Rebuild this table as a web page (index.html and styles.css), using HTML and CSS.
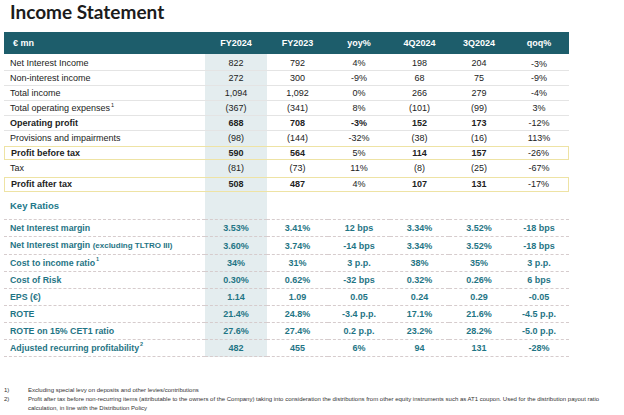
FILE: index.html
```html
<!DOCTYPE html>
<html lang="en">
<head>
<meta charset="utf-8">
<title>Income Statement</title>
<link rel="stylesheet" href="styles.css">
</head>
<body>
<h1 class="title">Income Statement</h1>
<table class="fin">
  <colgroup>
    <col class="c-label"><col class="c-fy24"><col class="c-fy23"><col class="c-yoy"><col class="c-4q"><col class="c-3q"><col class="c-qoq">
  </colgroup>
  <thead>
    <tr><th class="lbl">€ mn</th><th>FY2024</th><th>FY2023</th><th>yoy%</th><th>4Q2024</th><th>3Q2024</th><th>qoq%</th></tr>
  </thead>
  <tbody class="is">
    <tr class="first"><td class="lbl">Net Interest Income</td><td>822</td><td>792</td><td>4%</td><td>198</td><td>204</td><td class="q1">-3%</td></tr>
    <tr><td class="lbl">Non-interest income</td><td>272</td><td>300</td><td>-9%</td><td>68</td><td>75</td><td>-9%</td></tr>
    <tr><td class="lbl">Total income</td><td>1,094</td><td>1,092</td><td>0%</td><td>266</td><td>279</td><td>-4%</td></tr>
    <tr><td class="lbl">Total operating expenses<sup class="fn">1</sup></td><td>(367)</td><td>(341)</td><td>8%</td><td>(101)</td><td>(99)</td><td>3%</td></tr>
    <tr class="b"><td class="lbl">Operating profit</td><td>688</td><td>708</td><td>-3%</td><td>152</td><td>173</td><td class="reg">-12%</td></tr>
    <tr class="nob"><td class="lbl">Provisions and impairments</td><td>(98)</td><td>(144)</td><td>-32%</td><td>(38)</td><td>(16)</td><td>113%</td></tr>
    <tr class="b box pbt"><td class="lbl">Profit before tax</td><td>590</td><td>564</td><td class="reg">5%</td><td>114</td><td>157</td><td class="reg">-26%</td></tr>
    <tr class="nob tall"><td class="lbl">Tax</td><td>(81)</td><td>(73)</td><td>11%</td><td>(8)</td><td>(25)</td><td>-67%</td></tr>
    <tr class="b box"><td class="lbl">Profit after tax</td><td>508</td><td>487</td><td class="reg">4%</td><td>107</td><td>131</td><td class="reg">-17%</td></tr>
  </tbody>
  <tbody class="ratios">
    <tr class="krh"><td class="lbl">Key Ratios</td><td></td><td></td><td></td><td></td><td></td><td></td></tr>
    <tr class="kr"><td class="lbl">Net Interest margin</td><td>3.53%</td><td>3.41%</td><td>12 bps</td><td>3.34%</td><td>3.52%</td><td>-18 bps</td></tr>
    <tr class="kr"><td class="lbl">Net Interest margin <span class="small">(excluding TLTRO III)</span></td><td>3.60%</td><td>3.74%</td><td>-14 bps</td><td>3.34%</td><td>3.52%</td><td>-18 bps</td></tr>
    <tr class="kr"><td class="lbl">Cost to income ratio<sup class="fn">1</sup></td><td>34%</td><td>31%</td><td>3 p.p.</td><td>38%</td><td>35%</td><td>3 p.p.</td></tr>
    <tr class="kr"><td class="lbl">Cost of Risk</td><td>0.30%</td><td>0.62%</td><td>-32 bps</td><td>0.32%</td><td>0.26%</td><td>6 bps</td></tr>
    <tr class="kr"><td class="lbl">EPS (€)</td><td>1.14</td><td>1.09</td><td>0.05</td><td>0.24</td><td>0.29</td><td>-0.05</td></tr>
    <tr class="kr"><td class="lbl">ROTE</td><td>21.4%</td><td>24.8%</td><td>-3.4 p.p.</td><td>17.1%</td><td>21.6%</td><td>-4.5 p.p.</td></tr>
    <tr class="kr"><td class="lbl">ROTE on 15% CET1 ratio</td><td>27.6%</td><td>27.4%</td><td>0.2 p.p.</td><td>23.2%</td><td>28.2%</td><td>-5.0 p.p.</td></tr>
    <tr class="kr last"><td class="lbl">Adjusted recurring profitability<sup class="fn">2</sup></td><td>482</td><td>455</td><td>6%</td><td>94</td><td>131</td><td>-28%</td></tr>
  </tbody>
</table>
<ol class="notes">
  <li><span class="num">1)</span><span>Excluding special levy on deposits and other levies/contributions</span></li>
  <li><span class="num">2)</span><span>Profit after tax before non-recurring items (attributable to the owners of the Company) taking into consideration the distributions from other equity instruments such as AT1 coupon. Used for the distribution payout ratio calculation, in line with the Distribution Policy</span></li>
</ol>
</body>
</html>
```

FILE: styles.css
```css
* { box-sizing: border-box; }

body {
  margin: 0;
  width: 624px;
  background: #ffffff;
  color: #222222;
  font-family: "Liberation Sans", Arial, sans-serif;
}

.title {
  margin: 0;
  height: 32px;
  padding: 1px 0 0 10px;
  font-family: Lato, "Open Sans", sans-serif;
  font-weight: 700;
  font-size: 19px;
  line-height: 22px;
  color: #1c1c1c;
}

.fin {
  margin-left: 4px;
  width: 565px;
  table-layout: fixed;
  border-collapse: separate;
  border-spacing: 0;
  font-size: 9px;
}

.c-label { width: 201px; }
.c-fy24 { width: 62px; background: #e4edef; }
.c-fy23 { width: 61px; }
.c-yoy { width: 62px; }
.c-4q { width: 59px; }
.c-3q { width: 60px; }
.c-qoq { width: 60px; }

.fin th {
  height: 22px;
  padding: 0;
  background: #1d5d6b;
  color: #ffffff;
  font-weight: 700;
  line-height: 22px;
  text-align: center;
}

.fin th.lbl {
  text-align: left;
  padding-left: 9px;
}

.fin td {
  padding: 0;
  text-align: center;
  line-height: 14px;
  white-space: nowrap;
  border-bottom: 1px solid #e4e4e4;
}

.fin td.lbl {
  text-align: left;
  padding-left: 6px;
}

.fin tr.first td { padding-top: 2px; }
.fin tr.first td.q1 { padding-top: 5px; line-height: 11px; }

.fin tr.b td { font-weight: 700; }
.fin tr.b td.reg { font-weight: 400; }

.fin tr.nob td {
  border-bottom: none;
  line-height: 15px;
}

.fin tr.tall td { line-height: 17px; }

.fin tr.box td {
  border-top: 1px solid #eee3a4;
  border-bottom: 1px solid #eee3a4;
  line-height: 13px;
}

.fin tr.box.pbt td { line-height: 12px; }

.fin tr.box td:first-child { border-left: 1px solid #eee3a4; }
.fin tr.box td:last-child { border-right: 1px solid #eee3a4; }

.fn {
  font-size: 5.5px;
  vertical-align: top;
  line-height: 8px;
  margin-left: 1px;
}

.fin tr.krh td {
  border-bottom: none;
  line-height: 27px;
  color: #23798a;
  font-weight: 700;
  font-size: 9.5px;
}

.fin tr.kr td {
  border-bottom: none;
  border-top: 1px dashed #d6cccd;
  line-height: 16px;
  color: #1f7585;
  font-weight: 700;
}

.fin tr.kr.last td { border-bottom: 1px dashed #d6cccd; }

.fin tr.kr td.lbl { font-size: 8.8px; }

.small { font-size: 8px; }

.notes {
  list-style: none;
  margin: 29px 0 0 4px;
  padding: 0;
  width: 616px;
  font-size: 6px;
  line-height: 9px;
  color: #333333;
}

.notes li {
  display: grid;
  grid-template-columns: 24px 1fr;
}
```
